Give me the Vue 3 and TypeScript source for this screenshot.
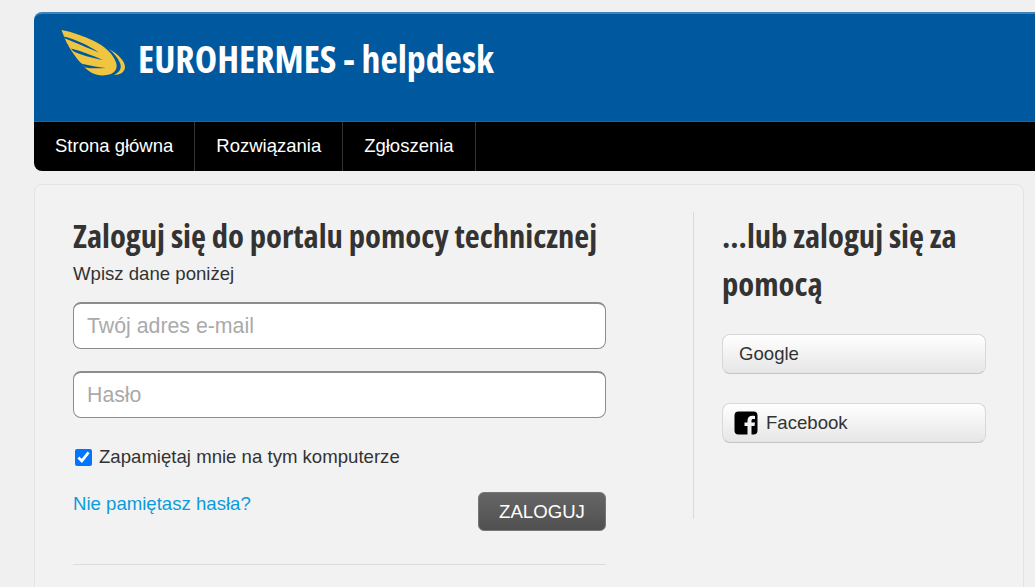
<script setup lang="ts">
import { ref } from 'vue'

const navItems = ['Strona główna', 'Rozwiązania', 'Zgłoszenia']
const remember = ref(true)
</script>

<template>
  <div class="page">
    <header class="banner">
      <svg class="wing" viewBox="0 0 68 50" width="68" height="50">
        <path d="M1.5 2C12 4 24 8 34 13C44 18 52 25 55 32C58 38 57 43 51 46C45 48 38 48 32 45C27 42 24 39 21 35C16 30 9 20 5 11Z" fill="#f0c640" />
        <path d="M3.5 8.5C15 11 28 17 39 24.5C28 20 15 14.5 5 10.5Z" fill="#00599f" />
        <path d="M11 20.5C22 23 33 28 43 32C32 30 20 27 13 23Z" fill="#00599f" />
        <path d="M21 35.5C30 38 38 39 46 40C38 40.5 30 40.5 25 39.5Z" fill="#00599f" />
        <path d="M49 21C58 26 65 33 65 39C65 44 60 47 54 47C60 44 62 40 60 35C58 30 54 25 49 21Z" fill="#f0c640" />
      </svg>
      <h1 class="brand">EUROHERMES - helpdesk</h1>
    </header>
    <nav class="menu">
      <a v-for="item in navItems" :key="item" class="menu-item">{{ item }}</a>
    </nav>
    <main class="card">
      <section class="login">
        <h2 class="title">Zaloguj się do portalu pomocy technicznej</h2>
        <p class="hint">Wpisz dane poniżej</p>
        <input class="field" type="text" placeholder="Twój adres e-mail" />
        <input class="field" type="password" placeholder="Hasło" />
        <label class="remember">
          <input v-model="remember" type="checkbox" />
          <span>Zapamiętaj mnie na tym komputerze</span>
        </label>
        <div class="actions">
          <a class="forgot">Nie pamiętasz hasła?</a>
          <button class="submit" type="button">ZALOGUJ</button>
        </div>
        <hr class="rule" />
      </section>
      <aside class="social">
        <h2 class="title title-side">...lub zaloguj się za pomocą</h2>
        <button class="provider" type="button">Google</button>
        <button class="provider provider-icon" type="button">
          <svg viewBox="0 0 24 24" width="24" height="24">
            <path d="M4.5 0.5H19.5A4 4 0 0 1 23.5 4.5V19.5A4 4 0 0 1 19.5 23.5H17.5V15H20.5L21 11.5H17.5V9.8C17.5 8.6 18 8 19.4 8H21V5C20.2 4.9 19.2 4.8 18.3 4.8C15.4 4.8 13.5 6.5 13.5 9.4V11.5H10.5V15H13.5V23.5H4.5A4 4 0 0 1 0.5 19.5V4.5A4 4 0 0 1 4.5 0.5Z" fill="#000" />
          </svg>
          <span>Facebook</span>
        </button>
      </aside>
    </main>
  </div>
</template>

<style>
html,
body {
  margin: 0;
  overflow: hidden;
  background: #f0f0f0;
}
</style>

<style scoped>
.page {
  width: 1035px;
  height: 587px;
  overflow: hidden;
  padding: 12px 0 0 34px;
  box-sizing: border-box;
  font-family: "Liberation Sans", Arial, sans-serif;
  color: #333;
}

.banner {
  display: flex;
  align-items: flex-start;
  width: 1040px;
  height: 109px;
  box-sizing: border-box;
  background: #00599f;
  border-top: 2px solid #3f82b7;
  border-radius: 8px 0 0 0;
  padding: 14px 0 0 26px;
}

.wing {
  flex: none;
}

.brand {
  margin: 8px 0 0 10px;
  font-family: "Open Sans", sans-serif;
  font-stretch: condensed;
  font-size: 37.8px;
  line-height: 46px;
  font-weight: 700;
  color: #fff;
  white-space: nowrap;
}

.menu {
  display: flex;
  width: 1040px;
  height: 50px;
  box-sizing: border-box;
  background: #000;
  border-top: 1px solid #3a5f7d;
  border-radius: 0 0 0 8px;
}

.menu-item {
  padding: 0 21px;
  line-height: 47px;
  font-size: 18.5px;
  color: #fff;
  border-right: 1px solid #333;
}

.card {
  display: flex;
  width: 990px;
  height: 500px;
  box-sizing: border-box;
  margin-top: 13px;
  padding: 26px 0 0 38px;
  background: #f2f2f2;
  border: 1px solid #e3e3e3;
  border-radius: 8px;
}

.login {
  width: 533px;
  flex: none;
}

.title {
  margin: 0;
  font-family: "Open Sans", sans-serif;
  font-stretch: condensed;
  font-size: 32.6px;
  line-height: 49px;
  font-weight: 700;
  color: #333;
}

.hint {
  margin: 2px 0 0;
  font-size: 18.6px;
  line-height: 24px;
}

.field {
  display: block;
  width: 100%;
  height: 47px;
  box-sizing: border-box;
  margin-top: 16px;
  padding: 0 13px;
  font-family: inherit;
  font-size: 21.3px;
  background: #fff;
  border: 1px solid #8c8c8c;
  border-top-width: 2px;
  border-radius: 8px;
  outline: none;
}

.field::placeholder {
  color: #aaa;
}

.field + .field {
  margin-top: 22px;
}

.remember {
  display: flex;
  align-items: center;
  gap: 7px;
  margin-top: 27px;
  font-size: 18.6px;
  line-height: 24px;
}

.remember input {
  width: 17px;
  height: 17px;
  margin: 0 0 0 2px;
}

.actions {
  display: flex;
  justify-content: space-between;
  align-items: flex-start;
  margin-top: 22px;
}

.forgot {
  font-size: 18.6px;
  line-height: 26px;
  color: #0a9bdc;
}

.submit {
  width: 128px;
  height: 39px;
  margin-top: 1px;
  font-family: inherit;
  font-size: 18.6px;
  color: #fff;
  background: linear-gradient(#666, #505050);
  border: 1px solid #777;
  border-radius: 6px;
}

.rule {
  margin: 33px 0 0;
  border: 0;
  border-top: 1px solid #dcdcdc;
}

.social {
  width: 293px;
  height: 307px;
  box-sizing: border-box;
  margin: 1px 0 0 87px;
  padding-left: 28px;
  border-left: 1px solid #d9d9d9;
}

.title-side {
  line-height: 48px;
  margin-bottom: 26px;
}

.provider {
  display: flex;
  align-items: center;
  width: 264px;
  height: 40px;
  box-sizing: border-box;
  padding: 0 16px;
  margin-bottom: 29px;
  font-family: inherit;
  font-size: 18.6px;
  color: #333;
  background: linear-gradient(#fff, #e6e6e6);
  border: 1px solid #d8d8d8;
  border-bottom-color: #c4c4c4;
  border-radius: 8px;
}

.provider-icon {
  gap: 8px;
  padding-left: 11px;
}
</style>
